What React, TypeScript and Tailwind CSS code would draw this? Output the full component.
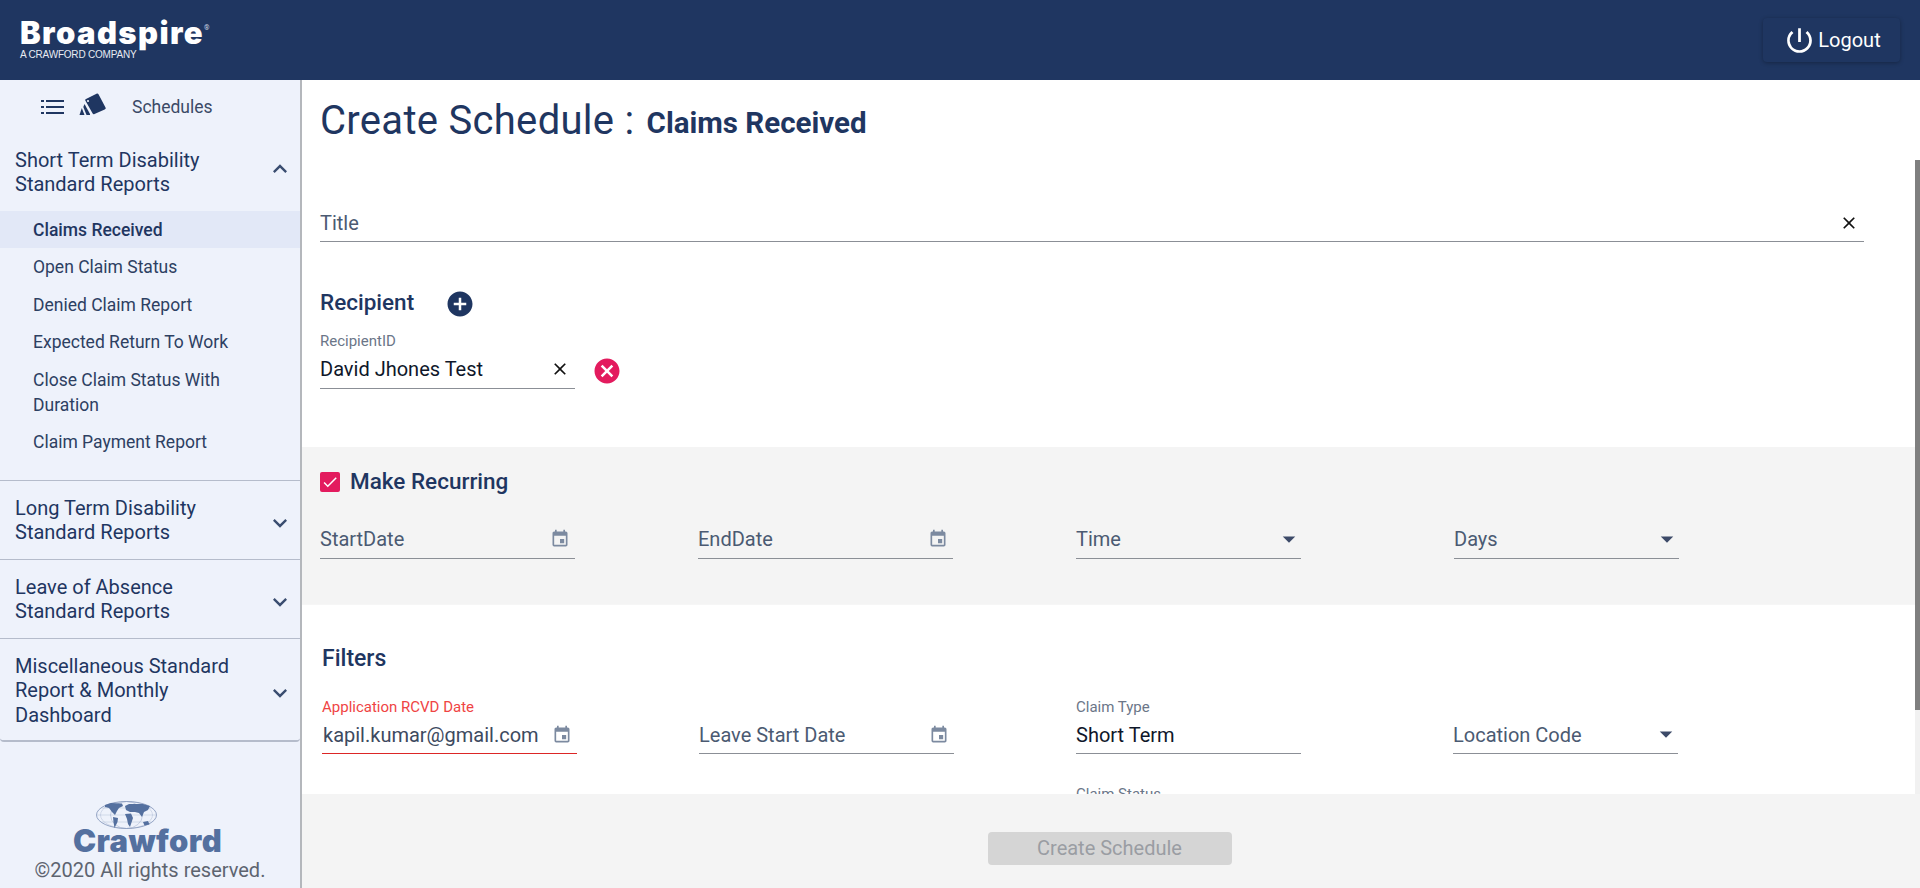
import React from "react";
import { MdEvent, MdClose, MdAddCircle, MdCancel, MdArrowDropDown, MdExpandLess, MdExpandMore, MdPowerSettingsNew, MdCheck } from "react-icons/md";

function Field({ w, label, value, icon, floating, error, cls, low }: { w: string; label?: string; value?: string; icon?: "date" | "drop" | "clear"; floating?: string; error?: boolean; cls?: string; low?: boolean }) {
  return (
    <div className={`${w} ${cls ?? ""} h-[56px] flex flex-col shrink-0`}>
      <div className={`h-[16px] text-[15px] leading-[16px] ${low ? "mt-[1px]" : ""} ${error ? "text-[#ef4444]" : "text-[#6b7688]"}`}>{floating ?? ""}</div>
      <div className={`flex-1 flex items-center justify-between border-b ${error ? "border-[#dc2626]" : "border-[#8b8f96]"}`}>
        <span className={`text-[20px] leading-[24px] ${low ? "mt-[1px]" : ""} ${error ? "pl-[1px]" : ""} ${value ? (error ? "text-[#3d4a60]" : "text-[#0f172a]") : "text-[#4b5a72]"}`}>{value ?? label}</span>
        {icon === "date" && <MdEvent className="text-[#7c8aa0] text-[20px] mr-[5px] mt-[1px]" />}
        {icon === "drop" && <MdArrowDropDown className="text-[#3c4a68] text-[30px] -mr-[3px]" />}
        {icon === "clear" && <MdClose className="text-[#111] text-[20px] mr-[5px] mt-[1px]" />}
      </div>
    </div>
  );
}

function Section({ lines, open }: { lines: string[]; open?: boolean }) {
  return (
    <div className="flex items-center justify-between pl-[15px] pr-[6px] h-[78px]">
      <div className="text-[20px] leading-[24.5px] text-[#1f3661]">
        {lines.map((l) => <div key={l}>{l}</div>)}
      </div>
      {open ? <MdExpandLess className="text-[#3a4d70] text-[28px] -mt-[7px]" /> : <MdExpandMore className="text-[#3a4d70] text-[28px] mt-[6px]" />}
    </div>
  );
}

function Globe() {
  return (
    <svg width="64" height="30" viewBox="0 0 64 30" className="block">
      <ellipse cx="31.500" cy="15" rx="30" ry="13.500" fill="none" stroke="#6e84ad" strokeWidth="0.7" />
      <ellipse cx="31.500" cy="15" rx="16" ry="13.500" fill="none" stroke="#8a9cc0" strokeWidth="0.4" />
      <ellipse cx="31.500" cy="15" rx="26" ry="13.500" fill="none" stroke="#8a9cc0" strokeWidth="0.3" />
      <path d="M2 15H61M6 8H57M6 22H57" stroke="#8a9cc0" strokeWidth="0.3" />
      <path d="M10 5L16 3L27 3.500L28 6L24 8L22 11L20 15L17 12L14 8L10 7Z M18 17L23 18L22.500 22L19.500 28L18.500 22Z M30 6L34 4L48 4L55 6L53 10L49 12L47 17L44 13L40 12L35 12L31 10Z M30 14L36 13.500L38 18L35 27L33 24L32 19Z M48 22L53 21L54.500 24.500L49.500 25.500Z" fill="#54709f" />
    </svg>
  );
}

export default function App() {
  return (
    <div className="h-[888px] w-[1920px] flex flex-col overflow-hidden bg-white text-[#1f3661] font-['Roboto',sans-serif]">
      <header className="h-[80px] shrink-0 bg-[#1f3661] flex items-center justify-between pl-[20px] pr-[20px]">
        <div className="text-white -mt-[3px]">
          <div className="flex items-start">
            <span className="font-['Inter',sans-serif] text-[31px] leading-[32px] font-black tracking-[1.4px]">Broadspire</span>
            <span className="text-[7px] leading-[10px] mt-[6px] text-[#cdd5e3]">®</span>
          </div>
          <div className="font-['Liberation_Sans',sans-serif] text-[10px] leading-[10px] tracking-[-0.2px] text-[#e7ebf2] mt-[1px]">A CRAWFORD COMPANY</div>
        </div>
        <button className="w-[137px] h-[44px] rounded-[4px] bg-[#1f3661] shadow-[0_1px_4px_rgba(0,0,0,0.3)] flex items-center justify-center gap-[2px] text-white text-[20px] pl-[1px]">
          <MdPowerSettingsNew className="text-[33px]" />
          Logout
        </button>
      </header>
      <div className="flex-1 flex min-h-0">
        <aside className="w-[302px] shrink-0 bg-[#eef2fb] border-r-2 border-[#b4b7bc] flex flex-col">
          <div className="h-[53px] flex items-center pl-[41px]">
            <svg width="23" height="14" viewBox="0 0 23 14" className="block">
              <path d="M0 0h3v2H0zM0 6h3v2H0zM0 12h3v2H0zM5 0h18v2H5zM5 6h18v2H5zM5 12h18v2H5z" fill="#1f3661" />
            </svg>
            <svg width="28" height="26" viewBox="0 0 28 26" className="ml-[14px] -mt-[1px]">
              <path d="M8 6L18.500 0.700C19.500 0.200 20 0.500 20.500 1.300L27.500 14.500C28 15.500 27.700 16 26.700 16.500L16.500 21C15.500 21.400 15 21.100 14.500 20.200L7.300 7.500C7 7 7.300 6.400 8 6Z" fill="#1f3661" />
              <circle cx="10" cy="8" r="1.100" fill="#eef2fb" />
              <path d="M6.500 11L12 21L12 22L8.500 22L5.300 14Z" fill="#1f3661" />
              <path d="M3.800 15L6.500 22L1.500 22Z" fill="#1f3661" />
            </svg>
            <span className="ml-[26px] text-[17.500px] text-[#3b4a66] mt-[1px]">Schedules</span>
          </div>
          <Section lines={["Short Term Disability", "Standard Reports"]} open />
          <div className="h-[270px] border-b border-[#b5bccb] text-[17.500px] text-[#1f3661]">
            <div className="h-[37px] bg-[#e2e8f7] flex items-center pl-[33px] font-medium pt-[1px]">Claims Received</div>
            <div className="pl-[33px] text-[#2d4062]">
              <div className="h-[37.500px] flex items-center">Open Claim Status</div>
              <div className="h-[37.500px] flex items-center pt-[1px]">Denied Claim Report</div>
              <div className="h-[37.500px] flex items-center">Expected Return To Work</div>
              <div className="pt-[7px] pb-[6px] leading-[25px]">Close Claim Status With<br />Duration</div>
              <div className="h-[37px] flex items-center">Claim Payment Report</div>
            </div>
          </div>
          <div className="border-b border-[#b5bccb]"><Section lines={["Long Term Disability", "Standard Reports"]} /></div>
          <div className="border-b border-[#b5bccb]"><Section lines={["Leave of Absence", "Standard Reports"]} /></div>
          <div className="border-b-2 border-[#b5bccb] rounded-b-[4px] h-[103px]">
            <div className="flex items-center justify-between pl-[15px] pr-[6px] h-[102px]">
              <div className="text-[20px] leading-[24.500px] text-[#1f3661] mt-[1px]">
                <div>Miscellaneous Standard</div><div>Report &amp; Monthly</div><div>Dashboard</div>
              </div>
              <MdExpandMore className="text-[#3a4d70] text-[28px] mt-[6px]" />
            </div>
          </div>
          <div className="flex-1 flex flex-col items-center justify-end pb-[6px]">
            <div className="-ml-[46px] -mb-[3px]"><Globe /></div>
            <div className="-ml-[5px] font-['Inter',sans-serif] text-[31px] leading-[27px] font-black tracking-[0.4px] text-[#54709f]">Crawford</div>
            <div className="text-[20px] leading-[24px] text-[#5d6470] mt-[4px]">©2020 All rights reserved.</div>
          </div>
        </aside>
        <main className="relative flex-1 flex flex-col min-w-0">
          <div className="h-[714px] overflow-hidden">
            <div className="pl-[18px] pt-[13px] flex items-baseline gap-[12px] h-[106px]">
              <span className="text-[40px] leading-[56px] tracking-[0.3px]">Create Schedule :</span>
              <span className="text-[29.500px] leading-[40px] font-bold -translate-y-[1px]">Claims Received</span>
            </div>
            <div className="pl-[18px]">
              <Field w="w-[1544px]" label="Title" icon="clear" low />
            </div>
            <div className="pl-[18px] mt-[46px] flex items-center h-[30px]">
              <span className="text-[22.500px] font-medium -mt-[1px]">Recipient</span>
              <MdAddCircle className="text-[30px] ml-[31px] mt-[2px]" />
            </div>
            <div className="pl-[18px] mt-[15px] flex items-center">
              <Field w="w-[255px]" floating="RecipientID" value="David Jhones Test" icon="clear" />
              <MdCancel className="text-[#e31b5e] text-[30px] ml-[17px] mt-[20px]" />
            </div>
            <section className="mt-[58px] h-[157px] bg-[#f4f4f4] pl-[18px]">
              <div className="pt-[25px] h-[56px] flex items-start">
                <span className="w-[20px] h-[20px] rounded-[2px] bg-[#e31b5e] flex items-center justify-center text-white"><MdCheck className="text-[18px]" /></span>
                <span className="ml-[10px] text-[22.500px] leading-[20px] font-medium -mt-[1px]">Make Recurring</span>
              </div>
              <div className="flex">
                <Field w="w-[255px]" label="StartDate" icon="date" />
                <Field w="w-[255px]" cls="ml-[123px]" label="EndDate" icon="date" />
                <Field w="w-[225px]" cls="ml-[123px]" label="Time" icon="drop" />
                <Field w="w-[225px]" cls="ml-[153px]" label="Days" icon="drop" />
              </div>
            </section>
            <div className="pl-[20px] pt-[41px] h-[94px] text-[23px] leading-[26px] font-medium border-t border-[#f6f6f6]">Filters</div>
            <div className="pl-[20px] flex">
              <Field w="w-[255px]" floating="Application RCVD Date" value="kapil.kumar@gmail.com" icon="date" error low />
              <Field w="w-[255px]" cls="ml-[122px]" label="Leave Start Date" icon="date" low />
              <Field w="w-[225px]" cls="ml-[122px]" floating="Claim Type" value="Short Term" low />
              <Field w="w-[225px]" cls="ml-[152px]" label="Location Code" icon="drop" low />
            </div>
            <div className="pl-[774px] mt-[32px] text-[15px] leading-[16px] text-[#6b7688]">Claim Status</div>
          </div>
          <div className="h-[94px] shrink-0 bg-[#f4f4f4] flex justify-center pt-[38px] pr-[3px]">
            <button className="w-[244px] h-[33px] rounded-[4px] bg-[#d5d5d5] text-[#9a9da3] text-[20px] leading-[33px]">Create Schedule</button>
          </div>
          <div className="absolute right-0 top-[80px] w-[5px] h-[550px] bg-[#7f7f7f]" />
          <div className="absolute right-0 top-[630px] w-[5px] h-[84px] bg-[#f1f1f1]" />
        </main>
      </div>
    </div>
  );
}
